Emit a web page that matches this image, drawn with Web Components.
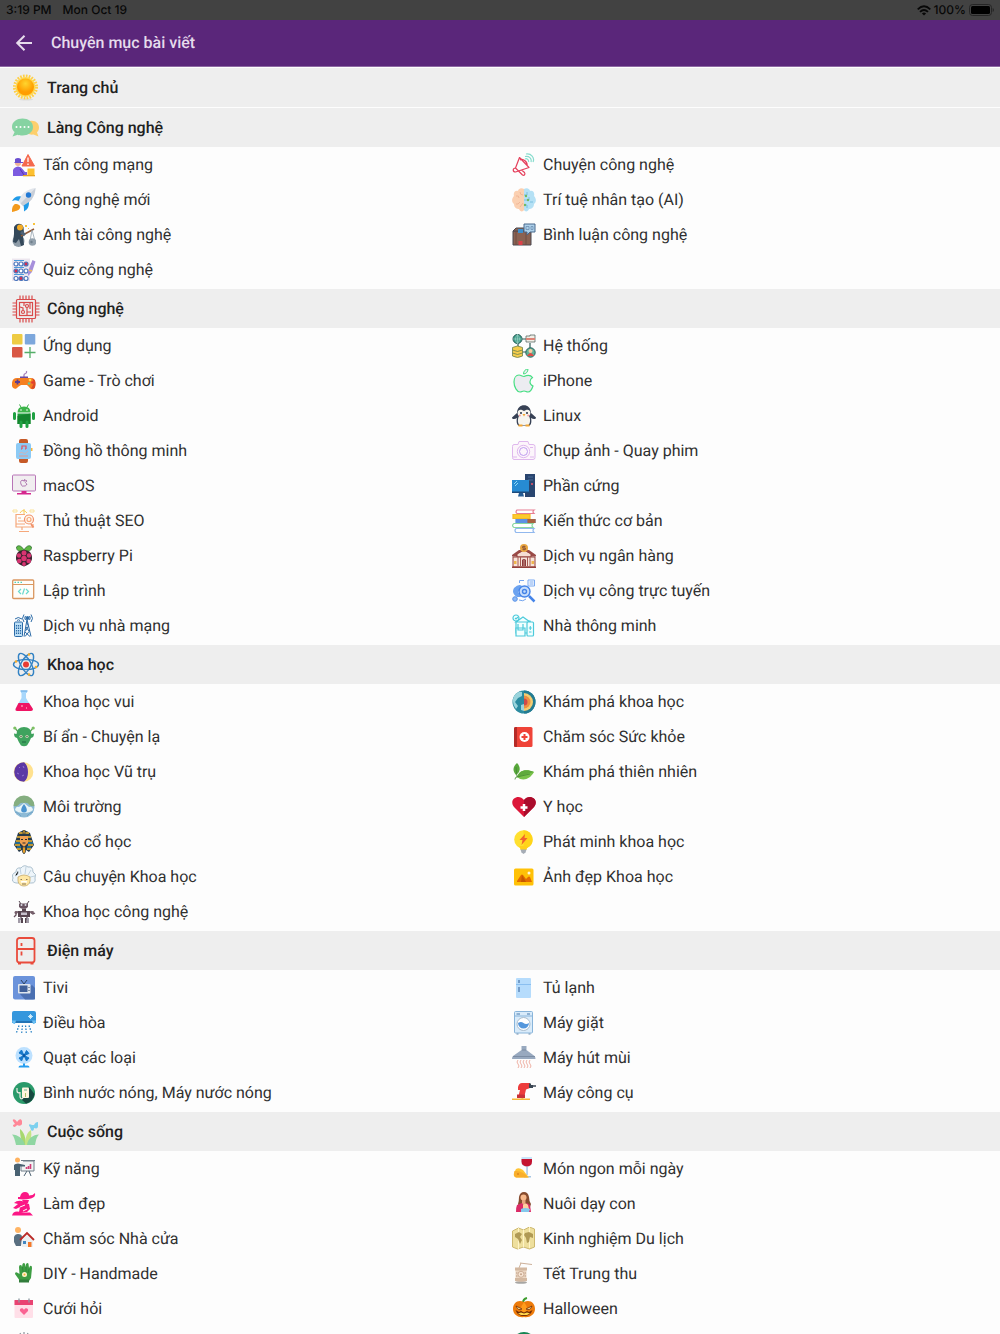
<!DOCTYPE html>
<html lang="vi">
<head>
<meta charset="utf-8">
<meta name="viewport" content="width=device-width, initial-scale=1">
<title>Chuyên mục bài viết</title>
<style>
  html, body {
    margin: 0;
    height: 100%;
  }
  body {
    font: 16px/20px Roboto, "Noto Sans", sans-serif;
    text-rendering: geometricPrecision;
    color: #303030;
    background: #fdfdfd;
  }
</style>
</head>
<body>

<category-app>
  <status-bar slot="top" time="3:19 PM" date="Mon Oct 19" battery="100%"></status-bar>
  <app-toolbar slot="top">Chuyên mục bài viết</app-toolbar>

  <category-section icon="sun" heading="Trang chủ"></category-section>

  <category-section icon="chat" heading="Làng Công nghệ">
    <category-item icon="hacker">Tấn công mạng</category-item>
    <category-item icon="megaphone">Chuyện công nghệ</category-item>
    <category-item icon="rocket">Công nghệ mới</category-item>
    <category-item icon="brain">Trí tuệ nhân tạo (AI)</category-item>
    <category-item icon="astronaut">Anh tài công nghệ</category-item>
    <category-item icon="box">Bình luận công nghệ</category-item>
    <category-item icon="quiz">Quiz công nghệ</category-item>
  </category-section>

  <category-section icon="chip" heading="Công nghệ">
    <category-item icon="apps">Ứng dụng</category-item>
    <category-item icon="system">Hệ thống</category-item>
    <category-item icon="gamepad">Game - Trò chơi</category-item>
    <category-item icon="apple">iPhone</category-item>
    <category-item icon="android">Android</category-item>
    <category-item icon="penguin">Linux</category-item>
    <category-item icon="watch">Đồng hồ thông minh</category-item>
    <category-item icon="camera">Chụp ảnh - Quay phim</category-item>
    <category-item icon="imac">macOS</category-item>
    <category-item icon="desktop">Phần cứng</category-item>
    <category-item icon="seo">Thủ thuật SEO</category-item>
    <category-item icon="books">Kiến thức cơ bản</category-item>
    <category-item icon="raspberry">Raspberry Pi</category-item>
    <category-item icon="bank">Dịch vụ ngân hàng</category-item>
    <category-item icon="code">Lập trình</category-item>
    <category-item icon="online">Dịch vụ công trực tuyến</category-item>
    <category-item icon="tower">Dịch vụ nhà mạng</category-item>
    <category-item icon="smarthome">Nhà thông minh</category-item>
  </category-section>

  <category-section icon="atom" heading="Khoa học">
    <category-item icon="flask">Khoa học vui</category-item>
    <category-item icon="earth">Khám phá khoa học</category-item>
    <category-item icon="alien">Bí ẩn - Chuyện lạ</category-item>
    <category-item icon="medbook">Chăm sóc Sức khỏe</category-item>
    <category-item icon="moon">Khoa học Vũ trụ</category-item>
    <category-item icon="leaf">Khám phá thiên nhiên</category-item>
    <category-item icon="environment">Môi trường</category-item>
    <category-item icon="heart">Y học</category-item>
    <category-item icon="pharaoh">Khảo cổ học</category-item>
    <category-item icon="bulb">Phát minh khoa học</category-item>
    <category-item icon="einstein">Câu chuyện Khoa học</category-item>
    <category-item icon="photo">Ảnh đẹp Khoa học</category-item>
    <category-item icon="robot">Khoa học công nghệ</category-item>
  </category-section>

  <category-section icon="fridge" heading="Điện máy">
    <category-item icon="tv">Tivi</category-item>
    <category-item icon="cooler">Tủ lạnh</category-item>
    <category-item icon="aircon">Điều hòa</category-item>
    <category-item icon="washer">Máy giặt</category-item>
    <category-item icon="fan">Quạt các loại</category-item>
    <category-item icon="hood">Máy hút mùi</category-item>
    <category-item icon="heater">Bình nước nóng, Máy nước nóng</category-item>
    <category-item icon="drill">Máy công cụ</category-item>
  </category-section>

  <category-section icon="flowers" heading="Cuộc sống">
    <category-item icon="training">Kỹ năng</category-item>
    <category-item icon="wine">Món ngon mỗi ngày</category-item>
    <category-item icon="lady">Làm đẹp</category-item>
    <category-item icon="mother">Nuôi dạy con</category-item>
    <category-item icon="house">Chăm sóc Nhà cửa</category-item>
    <category-item icon="map">Kinh nghiệm Du lịch</category-item>
    <category-item icon="glove">DIY - Handmade</category-item>
    <category-item icon="lantern">Tết Trung thu</category-item>
    <category-item icon="calendar">Cưới hỏi</category-item>
    <category-item icon="pumpkin">Halloween</category-item>
    <category-item icon="spark"></category-item>
    <category-item icon="wreath"></category-item>
  </category-section>
</category-app>

<script>
// Section icons use a 28 unit box, item icons a 24 unit box.
const SECTION_ICONS = {
  sun: `
    <defs><radialGradient id="g" cy=".3"><stop offset="0" stop-color="#ffd52e"/><stop offset="1" stop-color="#ff9d00"/></radialGradient></defs>
    <ellipse cx="14" cy="25.500" rx="7" ry="1" fill="#ddd"/>
    <circle cx="13.500" cy="13" r="11" fill="none" stroke="#ffcf45" stroke-width="3" stroke-dasharray="1.700 1.180"/>
    <circle cx="13.500" cy="13" r="10" fill="#ffd84d"/><circle cx="13.500" cy="13" r="8.500" fill="url(#g)"/>`,
  chat: `
    <path d="M18 7c5-1 9 2 9 6.500 0 2-.7 3.500-2 5l1.500 4-5-2c-2 .4-4 0-6-1z" fill="#fdcf6c"/>
    <path d="M10.500 4.500C16 4.500 21 7.500 21 13s-5 8.500-10.500 8.500c-2 0-3.500-.2-4.800-.8L.5 22.500 2.600 18C1 16.600 0 15 0 13c0-5.500 5-8.500 10.500-8.500z" fill="#86d3a2"/>
    <g fill="#fff"><circle cx="4.500" cy="13" r="1"/><circle cx="8.500" cy="13" r="1"/><circle cx="12.500" cy="13" r="1"/><circle cx="16.500" cy="13" r="1"/></g>`,
  chip: `
    <g fill="none" stroke="#d94a4a" stroke-width="1.200">
    <path d="M8 .5V5M11 .5V5M14 .5V5M17 .5V5M20 .5V5M8 23v4.500M11 23v4.500M14 23v4.500M17 23v4.500M20 23v4.500M.5 8H5M.5 11H5M.5 14H5M.5 17H5M.5 20H5M23 8h4.500M23 11h4.500M23 14h4.500M23 17h4.500M23 20h4.500"/>
    <rect x="4.500" y="4.500" width="19" height="19" rx="1"/><rect x="7.500" y="7.500" width="13" height="13"/>
    <circle cx="11" cy="17" r="1.500"/><circle cx="15" cy="11" r="1.500"/><path d="M11 15.500V13l-3-1M15 12.500V17h4M12 8v3M18 8v6M15 20v-3"/></g>`,
  atom: `
    <g fill="none" stroke="#3282c4" stroke-width="1.400"><ellipse cx="14" cy="13.500" rx="12.500" ry="5"/><ellipse cx="14" cy="13.500" rx="12.500" ry="5" transform="rotate(60 14 13.500)"/><ellipse cx="14" cy="13.500" rx="12.500" ry="5" transform="rotate(-60 14 13.500)"/></g>
    <circle cx="14" cy="13.500" r="3" fill="#e83c34"/><g fill="#f9ae2b"><circle cx="17" cy="3.500" r="1.300"/><circle cx="4" cy="10.500" r="1.300"/><circle cx="24" cy="16" r="1.300"/><circle cx="17" cy="23.500" r="1.300"/></g>`,
  fridge: `
    <g fill="none" stroke="#e94b3c" stroke-width="1.800"><rect x="5" y="1" width="17.500" height="24.500" rx="2.500"/><path d="M5 12h17.500M9.500 6v3M9.500 14.500v4"/><path d="M6 26.500h3M18.500 26.500h3"/></g>`,
  flowers: `
    <path d="M14 27C14 20 12 14 8 11c0 7 1 11 4 16z" fill="#a7d86f"/><path d="M13 27c0-7 2-13 6-15 1 6 0 11-3 15z" fill="#c4e485"/>
    <path d="M13 27C11 20 6 17 0 16.500c2 2 3 6 4 10.500zM15 27c1-7 6-10 12-10.500-3 3-3 7-4 10.500z" fill="#8fd6a2"/>
    <path d="M5 4C3 0 0 1 1 3l2 3-2 1c0 3 3 2 4 0 2 1 4 1 5-1V3C9 0 7 1 5 4z" fill="#ff8797"/>
    <path d="M20 7c-3-2-4 0-2 2l1 3c2 2 3 0 3-2 3 1 4 0 4-2V4c-2 0-3 1-4 3z" fill="#7cd0ee"/>`
};

const ITEM_ICONS = {
  hacker: `
    <path d="M16 1.500 22.500 13H10z" fill="#f5694d" stroke="#f5694d" stroke-linejoin="round"/><path d="M16 4.500V9M16 10.500V12" stroke="#fff" stroke-width="1.300"/>
    <circle cx="6" cy="10" r="3" fill="#efb39a"/><path d="M3 9V6q3-2 6 0v3h2v1H2z" fill="#6b4fd0"/>
    <path d="M1 23v-6q1-3 5-3.500 3 0 5 3l2 2.500h2V23z" fill="#7c5be0"/><path d="m8 16 4 6" stroke="#5437b1"/>
    <rect x="15.500" y="15.500" width="7" height="7.500" fill="#fdc02f"/><path d="M11 22h12v1.300H11z" fill="#e9a51c"/>`,
  rocket: `
    <path d="M23.500 0C15 1 9 6 6 13l5 5C18 15 23 9 23.500 0z" fill="#e1e5eb"/><path d="M23.500 0C23 9 18 15 11 18l-2.500-2.500z" fill="#c7ced8"/>
    <circle cx="16.500" cy="7" r="2.700" fill="#2179d5"/><path d="M9 8.500c-4-1-7 1-9 4.500 3-1 4-1 6.500 0zM17 14c0 5-1 7-5 9.500 0-3 0-4-.5-6z" fill="#219be8"/>
    <path d="M3 16c4 0 6 2 5 4-1 3-5 3-8 4C0 21 0 18 3 16z" fill="#f39a1d"/>`,
  astronaut: `
    <circle cx="6.500" cy="18" r="6" fill="#8e9ca8"/><path d="M2 11V4c2-4.500 8-4.500 9.500 0l.5 6-1 4 1 8-3 1-2-7-3 4-3-1z" fill="#34485a"/>
    <circle cx="8" cy="4.500" r="3" fill="#f5ad27"/><path d="m9 13 13-7" stroke="#925a38" stroke-width="1.500"/><path d="m9 9 4 3" stroke="#4f6377" stroke-width="3"/>
    <path d="m20 7-2 11M20 7l3 11" stroke="#8797a4" stroke-width=".7"/><circle cx="20.500" cy="19" r="3.800" fill="#93a1ad"/><circle cx="19.500" cy="19" r="1.200" fill="#6f7f8c"/>
    <path d="M13 2h2v2h-2zM21 0h2v2h-2zM16 5h1v1h-1z" fill="#f8c33b"/>`,
  quiz: `
    <path d="M0 .5h18V23H0z" fill="#ece6ee"/><path d="M2 2.500h10M2 9.500h10M2 16.500h10" stroke="#4a9cde"/>
    <g fill="#fff" stroke="#4b76bd" stroke-width="1.200"><circle cx="4" cy="6" r="2"/><circle cx="9" cy="6" r="2"/><circle cx="14" cy="6" r="2" fill="#d32f4f"/><circle cx="4" cy="13" r="2" fill="#d32f4f"/><circle cx="9" cy="13" r="2"/><circle cx="14" cy="13" r="2"/><circle cx="4" cy="20.500" r="2"/><circle cx="9" cy="20.500" r="2" fill="#d32f4f"/><circle cx="14" cy="20.500" r="2"/></g>
    <path d="m20.500 2 3 1.500L20 14l-4 4v-5z" fill="#a68fdb"/><path d="m17 12 3 1" stroke="#f6bd52" stroke-width="1.500"/>`,
  megaphone: `
    <g fill="none" stroke-width="1.200" stroke-linejoin="round"><path d="M7.500 4.500 17 14.500 6.500 18 3.500 15zM3.500 15c-3 0-3 4 0 4l3-1 4 4c2 1 3-1 2-2.500L9.500 17M8 7c3-2 8 2 7 6" stroke="#e5405c"/>
    <path d="M13 6c2-1 4 1 3.500 3M13 3.500c4-1 7 2 6 5.500M14 1c5-1 9 4 7 8" stroke="#87dccd"/></g>`,
  brain: `
    <path d="M12 1C9-1 6 1 6 3 3 2 1 5 2 8c-3 3-2 7 0 8 0 4 3 5 5 5 1 3 4 3 5 1z" fill="#fbd0b1"/><path d="M12 1c3-2 6 0 6 2 3-1 5 2 4 5 3 3 2 7 0 8 0 4-3 5-5 5-1 3-4 3-5 1z" fill="#b5e1f5"/>
    <path d="M4 8q3-1 3 2M8 4q0 3 3 3M4 16q2 1 4-2M8 19l3-4" stroke="#f0b797" fill="none"/><path d="M12 7h3V4M12 12h5V9M12 17h3v3M18 14h3" stroke="#7bbfdf" fill="none"/>
    <g fill="#73b95e"><circle cx="14" cy="8" r="1.200"/><circle cx="16" cy="12" r="1.200"/><circle cx="13" cy="17" r="1.200"/></g>`,
  box: `
    <path d="M1 8h18v14H1z" fill="#8a6252" stroke="#4a4850"/><path d="m1 8 3-3h15l1 3z" fill="#8c6454" stroke="#4a4850"/><path d="M6 6h5v4H6z" fill="#3f8fcc"/>
    <path d="M14 9v13M4 8v14" stroke="#6e4d42"/><path d="M6.500 18h4v4h-4z" fill="#dc414a"/>
    <path d="M12 1h11v8h-5l-3 3V9h-3z" fill="#aed1ea" stroke="#48688c"/><path d="M14 3.500h3v3h-3zM19 3.500h2v3h-2z" stroke="#6d8fb3" fill="none" stroke-width=".8"/>`,
  apps: `
    <rect width="10.500" height="10.500" rx="1" fill="#eecb43"/><rect x="12.800" width="10.500" height="10.500" rx="1" fill="#7da7dc"/><rect y="13" width="10.500" height="10.500" rx="1" fill="#d95744"/>
    <path d="M18 13v11M12.500 18.500h11" stroke="#54ae68" stroke-width="1.300"/>`,
  system: `
    <path d="M6 10v6M9 5h6M18 9v6M10 18h5" stroke="#2f5c57" stroke-width="1.200"/>
    <circle cx="5.500" cy="5" r="4.500" fill="#3c9c88" stroke="#285e58"/><path d="M1 5h9M5.500.5v9M5.500.5q-4 4.500 0 9M5.500.5q4 4.500 0 9" fill="none" stroke="#a9d9cc" stroke-width=".6"/>
    <path d="M14 2h4V1h5v7h-9z" fill="#f1eee6" stroke="#5b6b66" stroke-width=".8"/><path d="M14 4h9v2h-9z" fill="#dd8376"/>
    <path d="M.5 13.500q5-3 10 0V22q-5 3-10 0z" fill="#f6cd4b"/><path d="M.5 13.500q5-3 10 0V22q-5 3-10 0zM.5 16q5 3 10 0M.5 19q5 3 10 0" fill="none" stroke="#69804f" stroke-width=".8"/>
    <circle cx="18.500" cy="18.500" r="4.700" fill="#5fb39c" stroke="#285e58"/><circle cx="18.500" cy="17" r="2" fill="#f8cda5"/><path d="M15 22q3.500-6 7 0z" fill="#e14c47"/>`,
  gamepad: `
    <path d="M12 9V6q0-1 1.500-1.500T14.500 2" fill="none" stroke="#a782ba" stroke-width="1.300"/><path d="M8 7.500h8V10H8z" fill="#6a4ba3"/>
    <path d="M5 9h14c4 0 5 5 4 9-1 3-4 3-6 0l-2-2H9l-3 2c-2 3-5 2-6-1C-.5 12 1 9 5 9z" fill="#f57f20"/><path d="M20 9.200c4 1 4 5 3 9-1 2-2 2-4 1 3-3 3-7 1-10z" fill="#dc4a26"/>
    <path d="M5.500 10.500v5M3 13h5" stroke="#5a3d91" stroke-width="1.800"/><circle cx="18" cy="11" r="1.300" fill="#ffdb50"/><circle cx="20.500" cy="13.500" r="1.300" fill="#e53935"/><circle cx="17" cy="14.500" r="1.300" fill="#64c9a2"/>`,
  apple: `
    <path d="M12 7.500c-2 0-3-1.500-5-1.500-3 0-5 3-5 7 0 5 3 10 6 10 2 0 2-1 4-1s2 1 4 1c2 0 4-3 5-6-4-2-4-6-.5-8.500C18 5 15 6 12 7.500z" fill="#ececf1" stroke="#47df83" stroke-width="1.200"/><path d="M11.500 5c0-3 2-5 4.500-5 0 3-2 5-4.500 5z" fill="#ececf1" stroke="#47df83"/>`,
  android: `
    <path d="m7.500.5 2 3.500M16.500.5l-2 3.500" stroke="#38ac45"/><path d="M5.500 8.500Q5.500 2.500 12 2.500t6.500 6z" fill="#3cb54a"/><circle cx="9" cy="6" r=".8" fill="#fff"/><circle cx="15" cy="6" r=".8" fill="#fff"/>
    <path d="M5.500 9.500h13V20h-13z" fill="#1e9b3c"/><path d="M5.500 12 18.500 9.500V20h-13z" fill="#14852f"/><g stroke="#1fa142" stroke-width="3" stroke-linecap="round"><path d="M2.500 9.500v5M21.500 9.500v5M9 18v4.500M15 18v4.500"/></g>`,
  penguin: `
    <path d="M5 9C5-1.500 19-1.500 19 9l5 4.500c0 2-3 2-5 .5 1 4 0 7-2 8H7c-2-1-3-4-2-8-2 1.500-5 1.500-5-.5z" fill="#374155"/><path d="M12 7C6 3 4 9 7 12c-2 4-1 8 1 9.500h8c2-1.500 3-5.500 1-9.500 3-3 1-9-5-5z" fill="#f7f5ef"/>
    <circle cx="9" cy="9" r="1" fill="#263145"/><circle cx="15" cy="9" r="1" fill="#263145"/><path d="M10.500 10h3L12 12.500z" fill="#f5a330"/><circle cx="7.800" cy="11.500" r="1" fill="#f39a9d"/><circle cx="16.200" cy="11.500" r="1" fill="#f39a9d"/><path d="M6.500 20.500h4v2h-4zM13.500 20.500h4v2h-4z" fill="#f3a735"/>`,
  watch: `
    <path d="M7 5V2q0-2 2-2h5q2 0 2 2v3zM7 19v3q0 2 2 2h5q2 0 2-2v-3z" fill="#c65a28"/><rect x="4" y="4" width="15" height="16" rx="2" fill="#8ccaf5"/><path d="M19 9h1.500v3H19z" fill="#f7b73c"/>
    <path d="M10 10V7h4v3M9 10h1M13 10h1" fill="none" stroke="#df5160" stroke-width="1.200"/><path d="M7 15q2-3 4-1t5-2" fill="none" stroke="#ccb4bd"/><path d="M7 17h9" stroke="#de9a90"/>`,
  camera: `
    <g fill="none" stroke="#dfb8ed"><path d="M2 5.500h4l1-3h9l1 3h4q2 0 2 2v11q0 2-2 2H2q-1.500 0-1.500-2v-11q0-2 1.500-2z" fill="#fcf5fb"/><circle cx="11.500" cy="12.500" r="6.200"/><circle cx="11.500" cy="12.500" r="4" stroke="#be9cf0"/><path d="M1 18h4M18 18h4M18 8.500h3"/></g>`,
  imac: `
    <rect x=".5" y="1" width="23" height="16" rx="1" fill="#f1eef0" stroke="#b875b7"/><path d="M12 7c-3-2-4 1-3 3 1 3 2 2 3 2s2 0 3-2c-2-1-2-2 0-3-1-1-2 0-3 0l1-2" fill="none" stroke="#ab6dac"/>
    <path d="M9.500 17h5v2.500h-5zM5 19h14v1.500H5z" fill="#d6278e"/>`,
  desktop: `
    <path d="M13 0h10v23H13z" fill="#29456f"/><path d="M16 3h5M16 6h5" stroke="#496a96"/><circle cx="20" cy="10" r="1" fill="#ef566a"/><path d="M0 6h17v12H0z" fill="#278bd3"/><path d="M0 17.500h18V19H0z" fill="#1d4a7b"/>
    <path d="m2 10 3-3M3 12l3-3" stroke="#8dd9f6"/><path d="M7 19h4l1 3.500H6z" fill="#255c94"/>`,
  seo: `
    <g fill="none" stroke="#f6a87b" stroke-width="1.200"><path d="M13 5.500H4V18h17v-3M10 18v3M7 22.500h10M6 9h3M6 12h6M4 15h9"/><circle cx="17" cy="10.500" r="4.500" fill="#fff7ed" stroke="#f19069"/><circle cx="17" cy="10.500" r="2"/><path d="m19 15 2.500 3.500" stroke="#f19069" stroke-width="1.800"/></g>
    <path d="M1 1h4v2H1zM18 1h4v2h-4z" fill="none" stroke="#fae29b"/><path d="M8 4q3-5 7 0M12 0v5" stroke="#f7cd5b" fill="none"/>`,
  books: `
    <g fill="#fff" stroke-width="1.200"><path d="M5 1h17q-2 1.500 0 3.500H5Q3 3 5 1z" stroke="#e77d91"/><path d="M1 5.500h17v4H1z" fill="#fccb2d" stroke="#f5ba26"/><path d="M4 10.500h19v3H4z" fill="#5c91e3" stroke="#5c91e3"/><path d="M16 10.500h7v3h-7z" fill="#a76241" stroke="#a76241"/><path d="M2 14.500h19q-2 2 0 4H2q-3-2 0-4z" stroke="#8ad7a1"/><path d="M4 19.500h18q-2 2 0 4H4q-2-2 0-4z" stroke="#91b8ee"/></g>`,
  raspberry: `
    <path d="M12 6C9 1 6 1 4.500 3c0 4 3 5 7.500 4 4.500 1 7.500 0 7.500-4C18 1 15 1 12 6z" fill="#60b944" stroke="#2f6b34" stroke-width=".8"/>
    <path d="M12 6c-6 0-8 4-8 8s3 7 8 8.500c5-1.500 8-4.500 8-8.500s-2-8-8-8z" fill="#3c2330"/><g fill="#d93472"><circle cx="12" cy="9" r="2.500"/><circle cx="7" cy="11.500" r="2.200"/><circle cx="17" cy="11.500" r="2.200"/><circle cx="12" cy="14.500" r="2.700"/><circle cx="7.300" cy="17" r="2.300"/><circle cx="16.700" cy="17" r="2.300"/><circle cx="12" cy="20" r="1.900"/></g>`,
  bank: `
    <path d="M0 11 7 6h10l7 5v1.500H0z" fill="#9a4b48"/><path d="M5 10 12 6l7 4v3H5z" fill="#f5ded3" stroke="#94403c"/><path d="M1 13h22v10H1z" fill="#f7e4da" stroke="#94403c"/><path d="M6 13v9M8.500 13v9M15.500 13v9M18 13v9" stroke="#a85a52"/><path d="M10 16q2-2 4 0v6h-4z" fill="#8c3c3d"/><path d="M12 16v6" stroke="#e7bfb1" stroke-width=".7"/><circle cx="12" cy="4" r="4" fill="#e8a53f"/><path d="M13.500 2.500h-3V4h3v1.500h-3M12 1.500v5" fill="none" stroke="#85503a" stroke-width=".8"/><path d="M2 17h2.500v3H2zM19.500 17H22v3h-2.500z" fill="#efb74c"/><path d="M0 22.500h24V24H0z" fill="#94403c"/>`,
  code: `
    <rect x=".7" y="1" width="21" height="18.500" rx="1" fill="#fffdf9" stroke="#da9760" stroke-width="1.300"/><path d="M1 5.500h21" stroke="#da9760"/><path d="M2.500 3.300H4M5.500 3.300H7M8.500 3.300H10" stroke="#4fd2b8" stroke-width="1.300"/><path d="m9 10-2.500 2.500L9 15M14 10l2.500 2.500L14 15M12.500 9.500l-2 6" fill="none" stroke="#69d9cd" stroke-width="1.200"/>`,
  online: `
    <path d="M2 9q5-5 8-2l-4 6 3 5-4 0q-6-4-3-9z" fill="#6ba2f0"/>
    <g fill="none" stroke="#4584e8" stroke-width="1.400"><circle cx="12.500" cy="12.500" r="5.500" fill="#c5dcfb"/><circle cx="12.500" cy="12.500" r="2"/><path d="m17 17 5.500 5.500" stroke-width="2.500"/><path d="M7.500 4V1.500H12M16 1h6.500v6H16zM17.500 3h4M17.500 5h4" stroke-width="1" stroke="#78a9f2"/></g>
    <circle cx="3" cy="20" r="2.300" fill="#8db9f7" stroke="#5a93e6"/><path d="M7 21q4 2 7-1" fill="none" stroke="#72a4ef"/>`,
  tower: `
    <g fill="none" stroke="#2c6ba7"><rect x="2.500" y="8" width="8" height="14.500" rx="1" fill="#bde0f7"/><path d="M4.500 11v10M6.500 11v10M8.500 11v10" stroke-dasharray="1.500 1" stroke-width="1.200"/><path d="m12 22.500 3-17 4 17M13 18l5 4.500M17.500 17 13 22.500M14 13l3 4M16.500 12l-3 5M14.500 8l2 4"/><circle cx="15.500" cy="4" r="1.500" fill="#2c6ba7"/><path d="M12 8q-3-3.500 0-7.500M19 8q3-3.500 0-7.500M13.500 6q-1.500-2 0-4M17.500 6q1.500-2 0-4M3 5q3-3 7 0M5 6.500q1.500-1.500 3 0"/></g>`,
  smarthome: `
    <g fill="#f2ffff" stroke="#4ccadb" stroke-width="1.200"><path d="M4 7h14v12H4z"/><path d="m4 8 7-5 7 5z"/><circle cx="4" cy="4" r="3"/><path d="m3 4 1 1 2-2M6 10v6h5v-6M4 14v8h9v-8z"/><rect x="15" y="8" width="6.500" height="14" rx="1"/><path d="M17 18h2.500M18.300 12v4M16.800 14h3" stroke-width="1"/></g>`,
  flask: `
    <path d="M9 1h6v2h-1v5l6 10q0 2-2 2H5q-2 0-1-2l5.500-10V3H9z" fill="#a8d7fb"/><path d="M6.500 13h10.500l4 6q0 2-2 2H5q-2 0-1.500-2z" fill="#ef1463"/><path d="M9 16h2M14 18h1" stroke="#ff8eaf" stroke-width="1.300"/><path d="M8.500 1h7" stroke="#77b4e9" stroke-width="1.500"/>`,
  earth: `
    <circle cx="12" cy="12" r="11.500" fill="#2b8ba0"/><path d="M12 .5a11.500 11.500 0 0 1 0 23z" fill="#237b92"/><path d="M12 3a9 9 0 0 1 0 18z" fill="#f3cd72"/><path d="M12 5.500a6.500 6.500 0 0 1 0 13z" fill="#ee8f42"/><path d="M12 8.500a3.500 3.500 0 0 1 0 7z" fill="#cf4a4a"/><path d="M2 6q4-5 8-4v4l-4 2-3 4 3 4-2 3q-5-6-2-13zM9 15l3-1v7l-3-1z" fill="#9ad4dc"/>`,
  alien: `
    <path d="m7 8-4-5M17 8l4-5" stroke="#63a65b" stroke-width="1.300"/><circle cx="2.800" cy="3" r="1.600" fill="#7cc062"/><circle cx="21.200" cy="3" r="1.600" fill="#7cc062"/><path d="M12 2q7 0 7.500 7l2.500-.5q0 4-3 4.500-2 5-4 7.500-3 1.500-6 0-2-2.500-4-7.500-3-.5-3-4.500L4.500 9Q5 2 12 2z" fill="#3fa35e"/><ellipse cx="9" cy="11.500" rx="1.500" ry="1.200" fill="#fff0d8"/><ellipse cx="15" cy="11.500" rx="1.500" ry="1.200" fill="#fff0d8"/><circle cx="9" cy="11.500" r=".7" fill="#203d35"/><circle cx="15" cy="11.500" r=".7" fill="#203d35"/><path d="M10 17h4" stroke="#1f673e"/>`,
  medbook: `
    <rect x="2" y="2" width="18.500" height="20" rx="1.500" fill="#ef4338"/><path d="M2 3.500Q2 2 3.500 2H5v20H3.500Q2 22 2 20.500z" fill="#b42b28"/><circle cx="12.500" cy="12" r="5" fill="#fff"/><path d="M12.500 9v6M9.500 12h6" stroke="#ef4338" stroke-width="2"/>`,
  moon: `
    <circle cx="11.500" cy="12" r="9.800" fill="#ffe18e"/><path d="M12 2.200a9.800 9.800 0 1 0 0 19.600q4-3 4-9.800t-4-9.800z" fill="#5c38a5"/><path d="m7 7 1 1M5 13l2 1M10 16l2-1M11 6l1 2" stroke="#9475cf"/>`,
  leaf: `
    <path d="M5 3c-4.500 4-4.500 8-1 12 4.500-3 5-8 1-12z" fill="#58a83c"/><path d="M5 17c2-6 8-9 17-5-4 7-11 10-17 5z" fill="#79c24a"/><path d="M5 17c2-6 8-9 17-5z" fill="#5faa3c"/><path d="m4 7 1 10q-2 0-2 2.500M5 17l13-3" stroke="#448934" fill="none" stroke-width=".8"/>`,
  environment: `
    <circle cx="12" cy="12" r="10.500" fill="#8dbad5"/><path d="M1.500 11a10.500 10.500 0 0 1 21 0q-3 1-5-1-2-3-5.500-2-3.500-1-5.500 2-2 2-5 1z" fill="#85ae80"/><path d="M3 15q1-4 4-3l5-4 5 4q3-1 4 3-3 3-9 3t-9-3z" fill="#e9f5f8"/><path d="M12 9c-4.500 6-3 8.500 0 8.500s4.500-2.500 0-8.500z" fill="#4a93cf"/><path d="M3 17q4 1 6 4M21 17q-4 1-6 4" stroke="#73a5ca" fill="none"/>`,
  heart: `
    <path d="M12 22 2 12C-4 4 7-2 12 5c5-7 16-1 10 7z" fill="#dc1739"/><path d="M12 5c5-7 16-1 10 7L12 22z" fill="#aa0d2c"/><path d="M12 9v7M8.500 12.500h7" stroke="#fff" stroke-width="2.500"/>`,
  pharaoh: `
    <path d="M6 3q6-5 12 0l4 12-5 7-3-2h-4l-3 2-5-7z" fill="#26394a"/><g stroke="#efb52e" stroke-width="1.600"><path d="M7 3h10M5 7h3M16 7h3M4 11h4M16 11h4M3 15h5M16 15h5M5 19h4M15 19h4"/></g><path d="M3 13h5M16 13h5M5 17h4M15 17h4" stroke="#249cd3"/>
    <path d="M8 6h8v7l-4 4-4-4z" fill="#f0a050"/><path d="M9 9.500h2M13 9.500h2M10.500 13h3" stroke="#2c2930"/><path d="M10.500 17h3v5L12 24l-1.500-2zM11 0h2v4h-2z" fill="#e9a129" stroke="#253745" stroke-width=".7"/>`,
  bulb: `
    <circle cx="11.500" cy="9.500" r="9.300" fill="#ffe030"/><path d="M11.500.2a9.300 9.300 0 0 1 4 17.500l-4 1.300z" fill="#ffd41a"/><path d="M7.500 16h8l-1 4h-6z" fill="#ffd01b"/><path d="M8.500 19.500h6l-1 3-2 1.500-2-1.500z" fill="#a6adb6"/><path d="m13 4-5.500 6h3l-1 5 6-7h-3z" fill="#f2622d"/>`,
  einstein: `
    <path d="M4 7Q4 2 9 3q3-4 7-1 5-1 5 5 4 2 2 6 1 5-3 5H4q-5-1-3-5Q-1 9 4 7z" fill="#eef5fa" stroke="#9ab2c3" stroke-width=".8"/><path d="M3 11q4-1 3-5M8 3l1 6M14 2l-1 7M19 5l-3 5M23 11l-5 1" stroke="#b5c9d7" stroke-width=".8"/><path d="M6 12q6-4 12 0v4q-1 5-6 5t-6-5z" fill="#ffe7a3" stroke="#c7ab6c" stroke-width=".8"/><path d="M8.500 14.500h1.500M14 14.500h1.500M10 19h4" stroke="#8a7656"/><path d="M9 17q3-1 6 0" fill="none" stroke="#fff" stroke-width="1.500"/>`,
  photo: `
    <rect x="2" y="3.500" width="19.500" height="17" rx="1.500" fill="#ffc107"/><path d="M5 17v-1l4-6q1-1 2 0l3 4 2-2q1-1 2 0l2 5z" fill="#e36c00"/><circle cx="17" cy="8" r="1.500" fill="#fff8dd"/><path d="m10 10 4 7H9z" fill="#c75800"/>`,
  robot: `
    <path d="m9 4-2-3M15 4l2-3" stroke="#54444f"/><path d="M7 3.500h9V7l-2 1.500H9L7 7z" fill="#685361"/><circle cx="9.500" cy="5" r="1" fill="#dadbe3"/><circle cx="13.500" cy="5" r="1" fill="#dadbe3"/><path d="M10 8.500h4V11h-4zM6 11h12v6H6z" fill="#594651"/><path d="M9 12.500h6V15H9z" fill="#c8c0cc"/><path d="M6 12H4v3l-2 2M18 12h3v2l2-1M9 17v3M15 17v3" fill="none" stroke="#66515e" stroke-width="1.300"/><circle cx="4" cy="12.500" r="1.500" fill="#745d69"/><circle cx="20" cy="12.500" r="1.500" fill="#745d69"/><path d="M6 18h2.500v5H6zM14.500 18H17v5h-2.500z" fill="#a19ba7"/><path d="M9 18h2v5H9zM13 18h1.500v5H13z" fill="#54444f"/>`,
  tv: `
    <rect x="1" width="22" height="23.500" rx="2" fill="#6b93db"/><path d="m7 17 13-8 3 3v11q0 .5-1 .5H13z" fill="#4b70b2"/><path d="m9 4 3 4 3-4" fill="none" stroke="#2d435f"/><rect x="6" y="8" width="12.500" height="9.500" rx="1" fill="#dfe6ed"/><rect x="7.500" y="9.500" width="8" height="6.500" fill="#3f5f98"/><path d="M17 11v1M17 14v1" stroke="#2e4764"/>`,
  cooler: `
    <rect x="4" y="2" width="15" height="20" rx="1" fill="#b6dcfc"/><path d="M4 8.500h15" stroke="#8abff0"/><path d="M7 4v3M7 11v5" stroke="#527cae" stroke-width="1.300"/>`,
  aircon: `
    <path d="M2 0h20q2 0 2 2v10H0V2q0-2 2-2z" fill="#3597dd"/><path d="M3 10h18v2H3z" fill="#2374b5"/><path d="M0 9.500h4L3 13H2q-2-1-2-3.500zM20 9.500h4q0 2.500-2 3.500h-1z" fill="#6dc0f3"/><path d="M18.500 3v5M16 5.500h5M17 4l3 3M20 4l-3 3" stroke="#eafaff" stroke-width=".8"/><path d="M7 14.500 4 23M10.500 14.500l-1 8.500M13.500 14.500l1 8.500M17 14.500l3 8.500" stroke="#2680c4" stroke-width="1.300" stroke-dasharray="1.500 1.500"/>`,
  washer: `
    <rect x="2.500" y=".5" width="18" height="21.500" rx="1" fill="#d9ebfa" stroke="#88b4da"/><path d="M3 5h17" stroke="#88b4da"/><path d="M4.500 3H8M15 3h3" stroke="#487bad"/><circle cx="11.500" cy="13" r="6.500" fill="#fff" stroke="#a9bccd"/><path d="M6 12q3-2 5.500 0t5.500 0a5.500 5.500 0 0 1-11 0z" fill="#5597dc"/><path d="M4.500 23h2M16.500 23h2" stroke="#678daf"/>`,
  fan: `
    <circle cx="12" cy="9.500" r="8.500" fill="#bde1ff"/><path d="m12 9.500-5-2.500 2.500-3zM12 9.500l2.500-5 2.500 3zM12 9.500l5 2.500-2.500 3zM12 9.500l-2.500 5.500L7 12z" fill="#1678ca" stroke="#1678ca" stroke-linejoin="round"/><circle cx="12" cy="9.500" r="1.500" fill="#0959a5"/><path d="M11 17.500h2V20h-2zM6.500 21.500q0-2 2-2h7q2 0 2 2z" fill="#249df0"/>`,
  hood: `
    <path d="M9.500 0h5v4l8 6q1 1 1 3H0q0-2 1-3l8.500-6z" fill="#98a9bf"/><path d="M10 4h4M1 10.500h22" stroke="#75869d" stroke-width=".8"/><path d="M6 14q-2 2 0 4t0 4M9 14q-2 2 0 4t0 4M12 14q-2 2 0 4t0 4M15 14q-2 2 0 4t0 4M18 14q-2 2 0 4t0 4" stroke="#efb2a5" fill="none"/>`,
  heater: `
    <circle cx="12" cy="12" r="11" fill="#2a9a6a"/><path d="m9 18 8-12 5.500 7a11 11 0 0 1-8.500 9.800z" fill="#174a40"/><rect x="10" y="6.500" width="7" height="10.500" rx="1" fill="#fff5df"/><path d="M12 9h3" stroke="#70b49c"/><path d="M13.500 12v4" stroke="#a8c66a"/><path d="M8 11v5q1 3 3 1M5 7v3q0 2 3 2" fill="none" stroke="#e8ece3" stroke-width="1.200"/>`,
  drill: `
    <path d="M6 6q1-4 4-4h8v5l-4 1.500L12 17H6l2-8H6z" fill="#ed3c3c"/><path d="M17 2.500h2V4h2v3h-4z" fill="#3b4653"/><path d="M20 5h4" stroke="#3b4653" stroke-width="1.500"/><path d="M5 13.500h8V17H5z" fill="#c83038"/><path d="M0 17.500h8q3-1 4 0h6V19H0z" fill="#f7b83a"/>`,
  training: `
    <path d="M9 3.500h14M11 4h11v10H9V8" stroke="#6f7d88" fill="#f1f3f4"/><path d="M14.500 12v-2M16.500 12V9M18.500 12V7" stroke="#cf3d77" stroke-width="1.600"/><path d="m15 14-3 5M17 14l2 5" stroke="#4f6373"/><circle cx="5.500" cy="3" r="2.500" fill="#ffb25f"/><path d="M2 8q1-1.500 4-1.500L13 8v1.500H8V19H3v-6H2z" fill="#496272"/>`,
  wine: `
    <path d="M9.500 0h10.500v4.500q0 5-5 5.500-5.500-.5-5.500-5.500z" fill="#c9e5fb"/><path d="M9.500 2H20v2.500Q20 9 15 9.500 9.500 9 9.500 4.500z" fill="#c51431"/><path d="M14.300 10h1.500v8h-1.500zM12 19h7v1.500h-7z" fill="#a6c5e3"/><path d="M4 12q3-2 7 1l6 7.500H4q-3-1-2-4.500z" fill="#ffc435"/><path d="M2.500 14q8-1 13.500 6.500H4q-3-1-1.500-6.500z" fill="#f9ae2b"/><circle cx="6" cy="17" r="1" fill="#dd861b"/>`,
  lady: `
    <path d="M8 5q1-5 5-5 4 0 4 3.500 4 0 6-2.500 1 4-4 5.500Q12 8 6 7V5z" fill="#fb1785"/><path d="M10 8h7l-1 3h-4z" fill="#fb1785"/><path d="M2 11q3-3 8-2l7 3 1 5-3 3H7l1-5-4 2-3-1 5-4z" fill="#fb1785"/><path d="M0 23.500q1-4 5-4l8 1h5l3 3z" fill="#fb1785"/><path d="m8 15 5-2M15 17l-4 2" stroke="#fdfdfd"/>`,
  mother: `
    <path d="M6 12q1-3 1-7 1-5 5-5t5 5q0 4 2 7l-1 3H7z" fill="#874c2f"/><circle cx="11.500" cy="5.500" r="3" fill="#f8b98b"/><path d="M10 8h3.500v5H10z" fill="#e9a57e"/><path d="m5 13 5-2 2 3 3-3 3 2 1 7H4q0-5 1-7z" fill="#db2b67"/><path d="M11 13q3-3 5 0l1 4-6 2z" fill="#ffcf9f"/><path d="M9 17q4-2 9 0l-1 3H9z" fill="#84c9ed"/>`,
  house: `
    <circle cx="6" cy="3" r="3" fill="#ffb464"/><path d="M2 10q1-3 4-3 4 0 4 3l-1 9H4l-2-4z" fill="#596f80"/><path d="m10 13 5-5 6 5v7H10z" fill="#eceff1"/><path d="m8 13 7-7 7 7" fill="none" stroke="#ba2a27" stroke-width="1.800"/><path d="M16 15h3.500v5H16z" fill="#f47829"/><path d="M11 14h3v3h-3z" fill="#4287c0"/>`,
  map: `
    <path d="m.5 4 6-3 5 2 6-3 5 2v18l-5 2-6-2-6 2-5-2z" fill="#eedf9d" stroke="#cdb86e"/><path d="M6.500 1v21M11.500 3v17M17.500 0v21" stroke="#fff4c5"/><path d="m3 7 4-2 3 2-2 3 2 3-2 4-2-5-3-2zM13 6l4-1 4 2v4l-3-1-1 5-2 1-1-5-2-3z" fill="#b09a55"/>`,
  glove: `
    <path d="M7 5q0-2 1.500-2T10 5l.5-3q1.500-2 2.500 0l.5 3 .5-3q2-2 2.500 0l.5 4 1-2q2-1 2 2l-1 10-2 3H8l-5-7q0-3 3-1l1.500 1z" fill="#3d9d43"/><path d="m10.500 5 .5 5M14 5v5M17 7l-1 4" stroke="#2c8238" stroke-width=".8"/><circle cx="12.500" cy="12.500" r="2.500" fill="#fff1c7"/><circle cx="12.500" cy="12.500" r="1" fill="#f4b32f"/><path d="M7 17.500h10v3H7z" fill="#327d3b"/>`,
  lantern: `
    <path d="m8 1 12 1.500M9 1 7 6" stroke="#cdb19a"/><ellipse cx="9" cy="20.500" rx="6" ry="1.300" fill="#a7a6a4"/><path d="M3.500 6h11v13h-11z" fill="#ebd6c3"/><path d="M3 5.500h12v3H3zM3 16h12v3q-6 1.500-12 0z" fill="#d3b8a0"/><circle cx="9" cy="12.300" r="3" fill="#f6e4d3" stroke="#c4a38a" stroke-width=".8"/><circle cx="9" cy="12.300" r="1" fill="#c4a38a"/><path d="M4 11h1.500M12.500 11H14M4 14h1.500M12.500 14H14" stroke="#bc9c83"/>`,
  calendar: `
    <path d="M2.500 4H21v16q0 1-1 1H3.500q-1 0-1-1z" fill="#ffdfe8"/><path d="M2.500 3H21v5H2.500z" fill="#e94372"/><path d="M7 1.500v4M17 1.500v4" stroke="#8d99a2" stroke-width="1.300"/><path d="m12 18-4-4c-1-3 3-4 4-1 1-3 5-2 4 1z" fill="#fa6292"/>`,
  pumpkin: `
    <path d="M11 6q0-4 4-5" fill="none" stroke="#3c9c2d" stroke-width="2"/><path d="M12 5c6-3 11 1 11 7 0 6-6 9-11 8C7 21 1 18 1 12 1 6 6 2 12 5z" fill="#ed7b0a"/><path d="M12 5Q6 12 12 20 18 12 12 5z" fill="#ff9c1b"/><path d="m4 9 6 3q-4 2-6-3zM20 9l-6 3q4 2 6-3z" fill="#fff0a0" stroke="#6e2b06" stroke-width=".8"/><path d="m3.500 13 3.500 2 2-1 3 1.500 3-1.500 2 1 3.500-2q-2 6-8.500 6t-8.500-6z" fill="#6e2b06"/><path d="m6 16.500 3-1 3 1 3-1 3 1-3 1.500h-6z" fill="#ffd84d"/>`,
  spark: `<path d="M12 0v5M8 1l2 4M16 1l-2 4" stroke="#8b949c" stroke-width="1.200"/>`,
  wreath: `<circle cx="12" cy="12" r="12" fill="#168553"/><circle cx="12" cy="12" r="7" fill="#e9f5ed"/>`
};

class CategoryIcon extends HTMLElement {

  constructor() {
    super();
    this.attachShadow({ mode: 'open' });
  }

  connectedCallback() {
    const name = this.getAttribute('name');
    const isSection = name in SECTION_ICONS;
    const size = isSection ? 28 : 24;
    this.shadowRoot.innerHTML = `
      <style>
        :host { display: block; flex: none; width: ${size}px; height: ${size}px; }
        svg { display: block; width: 100%; height: 100%; }
      </style>
      <svg viewBox="0 0 ${size} ${size}" aria-hidden="true">${isSection ? SECTION_ICONS[name] : ITEM_ICONS[name]}</svg>
    `;
  }
}

class StatusBar extends HTMLElement {

  constructor() {
    super();
    this.attachShadow({ mode: 'open' });
  }

  connectedCallback() {
    this.shadowRoot.innerHTML = `
      <style>
        :host {
          display: flex;
          align-items: center;
          justify-content: space-between;
          height: 20px;
          padding: 0 6px;
          background: #424242;
          color: #080808;
          font: 500 12px/20px Inter, "Liberation Sans", sans-serif;
        }
        div { display: flex; align-items: center; }
        .left { gap: 11px; }
        .right { gap: 3px; }
        svg { display: block; }
      </style>
      <div class="left">
        <span>${this.getAttribute('time')}</span>
        <span>${this.getAttribute('date')}</span>
      </div>
      <div class="right">
        <svg width="14" height="11" viewBox="0 0 14 11" fill="none" stroke="#080808" stroke-width="1.800">
          <path d="M.7 4.300Q7-1.700 13.300 4.300M3 6.800q4-3.700 8 0"/>
          <path d="M7 10.600 4.900 8.400q2.100-1.700 4.200 0z" fill="#080808" stroke="none"/>
        </svg>
        <span>${this.getAttribute('battery')}</span>
        <svg width="25" height="12" viewBox="0 0 25 12">
          <rect x=".5" y=".5" width="22" height="11" rx="3" fill="none" stroke="#252525"/>
          <rect x="2" y="2" width="19" height="8" rx="1.500" fill="#000"/>
          <path d="M23.700 4v4q1.300-.5 1.300-2t-1.300-2z" fill="#252525"/>
        </svg>
      </div>
    `;
  }
}

class AppToolbar extends HTMLElement {

  constructor() {
    super();
    this.attachShadow({ mode: 'open' });
  }

  connectedCallback() {
    this.shadowRoot.innerHTML = `
      <style>
        :host {
          display: flex;
          align-items: center;
          gap: 15px;
          height: 47px;
          padding: 0 12px;
          box-sizing: border-box;
          border-bottom: 1px solid #8d69a3;
          background: #5a267a;
          color: #e6dcec;
        }
        button {
          padding: 0;
          border: 0;
          background: none;
          color: inherit;
        }
        svg { display: block; }
        h1 { margin: 0; font-size: 16px; font-weight: 500; line-height: 20px; }
      </style>
      <button type="button" aria-label="Quay lại">
        <svg width="24" height="24" viewBox="0 0 24 24" fill="none" stroke="currentColor" stroke-width="2">
          <path d="M20 12H5.500M12.500 4.700 5.200 12l7.300 7.300"/>
        </svg>
      </button>
      <h1><slot></slot></h1>
    `;
  }
}

class CategorySection extends HTMLElement {

  constructor() {
    super();
    this.attachShadow({ mode: 'open' });
  }

  connectedCallback() {
    const hasItems = this.children.length > 0;
    this.shadowRoot.innerHTML = `
      <style>
        :host { display: block; }
        h2 { margin: 0; font-size: 16px; font-weight: 500; line-height: 20px; }
        h2 a {
          display: flex;
          align-items: center;
          gap: 7px;
          height: 39px;
          padding: 0 12px;
          background: #eee;
          color: #212121;
          text-decoration: none;
        }
        .items {
          display: grid;
          grid-template-columns: 1fr 1fr;
          grid-auto-rows: 35px;
          padding-bottom: ${hasItems ? '2px' : '1px'};
        }
      </style>
      <h2>
        <a href="#${this.getAttribute('icon')}">
          <category-icon name="${this.getAttribute('icon')}"></category-icon>
          <span>${this.getAttribute('heading')}</span>
        </a>
      </h2>
      <div class="items"><slot></slot></div>
    `;
  }
}

class CategoryItem extends HTMLElement {

  constructor() {
    super();
    this.attachShadow({ mode: 'open' });
  }

  connectedCallback() {
    this.shadowRoot.innerHTML = `
      <style>
        :host { display: block; }
        a {
          display: flex;
          align-items: center;
          gap: 7px;
          height: 35px;
          padding: 0 12px;
          color: inherit;
          text-decoration: none;
        }
      </style>
      <a href="#${this.getAttribute('icon')}">
        <category-icon name="${this.getAttribute('icon')}"></category-icon>
        <span><slot></slot></span>
      </a>
    `;
  }
}

class CategoryApp extends HTMLElement {

  constructor() {
    super();
    this.attachShadow({ mode: 'open' });
  }

  connectedCallback() {
    this.shadowRoot.innerHTML = `
      <style>
        :host { display: flex; flex-direction: column; height: 100vh; }
        main {
          flex: 1;
          min-height: 0;
          padding-top: 1px;
          overflow-y: auto;
          scrollbar-width: none;
        }
      </style>
      <header><slot name="top"></slot></header>
      <main><slot></slot></main>
    `;
  }
}

customElements.define('category-icon', CategoryIcon);
customElements.define('status-bar', StatusBar);
customElements.define('app-toolbar', AppToolbar);
customElements.define('category-section', CategorySection);
customElements.define('category-item', CategoryItem);
customElements.define('category-app', CategoryApp);
</script>
</body>
</html>
